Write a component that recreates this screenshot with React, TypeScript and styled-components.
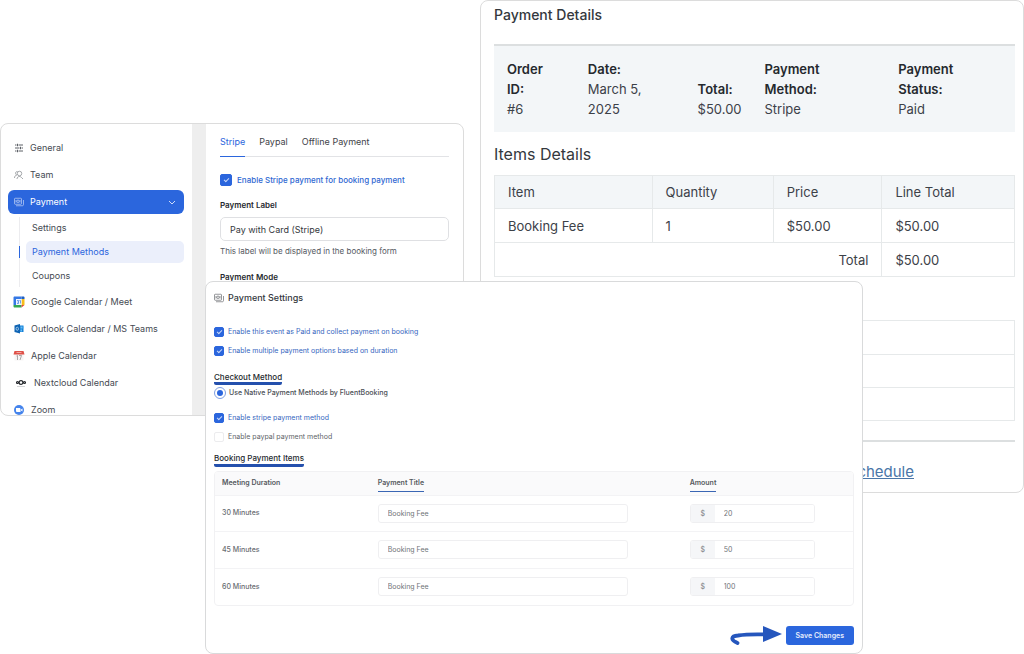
import React from 'react';
import styled, { createGlobalStyle, css } from 'styled-components';

const GlobalStyle = createGlobalStyle`
  *, *::before, *::after { box-sizing: border-box; }
  body {
    margin: 0;
    background: #fff;
    color: #3c4148;
    font-family: Inter, "Liberation Sans", sans-serif;
  }
  h2, h3, p, ul, dl, dd { margin: 0; padding: 0; font-weight: 400; }
  ul { list-style: none; }
  input, button { font-family: inherit; margin: 0; }
`;

const blue = '#2b66dd';

/* Three overlapping windows share one grid row. */
const Stage = styled.main`
  display: grid;
  grid-template-columns: 205fr 259fr 16fr 383fr 161fr;
  align-items: start;
`;

const Panel = styled.section`
  grid-row: 1;
  min-width: 0;
  background: #fff;
  border: 1px solid #dcdcdc;
  border-radius: 8px;
  overflow: hidden;
`;

/* ---------- Order details ---------- */

const OrderPanel = styled(Panel)`
  grid-column: 4 / 6;
  padding: 4px 8px 9px 13px;
`;

const OrderTitle = styled.h2<{ $large?: boolean }>`
  font-size: ${(p) => (p.$large ? 16 : 14)}px;
  font-weight: ${(p) => (p.$large ? 400 : 500)};
  line-height: 20px;
  color: #34383d;
`;

const Summary = styled.dl`
  display: grid;
  grid-template-columns: 81fr 110fr 67fr 134fr 117fr;
  align-items: end;
  margin: 19px 0 12px;
  padding: 13px 0 13px 13px;
  border-top: 2px solid #dcdfe0;
  background: #f3f6f8;
  font-size: 13px;
  line-height: 20px;

  dt { font-weight: 600; color: #25292e; }
`;

const OrderTable = styled.table`
  width: 100%;
  margin-top: 11px;
  table-layout: fixed;
  border-collapse: collapse;
  font-size: 13px;
  line-height: 16px;

  th, td {
    height: 33px;
    padding: 0 13px;
    border: 1px solid #e6e9ea;
    font-weight: 400;
    text-align: left;
  }
  th { background: #f3f6f8; }
  tbody > tr > *, tfoot > tr > * { height: 34px; }
  tfoot th { background: #fff; text-align: right; }
`;

const EmptyTable = styled.ul`
  margin: 43px 0 19px;
  border: 1px solid #e6e9ea;

  li { height: 33px; }
  li + li { border-top: 1px solid #e6e9ea; }
`;

const OrderFooter = styled.footer`
  padding: 19px 101px 0 0;
  border-top: 2px solid #dcdfe0;
  text-align: right;
`;

const OrderLink = styled.a`
  color: #4a76a8;
  font-size: 15px;
  line-height: 22px;
`;

/* ---------- Settings ---------- */

const SettingsPanel = styled(Panel)`
  grid-column: 1 / 3;
  display: grid;
  grid-template-columns: 191fr 271fr;
  max-height: 293px;
  margin-top: 123px;
`;

const Sidebar = styled.nav`
  padding: 12px 8px 0 7px;
`;

const NavList = styled.ul`
  display: flex;
  flex-direction: column;
  gap: 3px;
`;

const NavLink = styled.a<{ $active?: boolean; $app?: boolean; $wide?: boolean }>`
  display: flex;
  align-items: center;
  gap: ${(p) => (p.$wide ? 7 : 6)}px;
  height: 24px;
  padding: 0 8px 0 ${(p) => (p.$wide ? 7 : p.$app ? 5 : 6)}px;
  border-radius: 6px;
  background: ${(p) => (p.$active ? blue : 'transparent')};
  color: ${(p) => (p.$active ? '#fff' : '#454a52')};
  font-size: 9px;
  line-height: 14px;
  text-decoration: none;
  white-space: nowrap;

  svg { flex: none; }
  span { flex: 1; }
`;

const SubList = styled.ul`
  display: flex;
  flex-direction: column;
  gap: 2px;
  margin: 3px 0 0 11px;
  border-left: 1px solid #ececef;
`;

const SubLink = styled.a<{ $active?: boolean }>`
  position: relative;
  display: block;
  height: 22px;
  margin-left: 6px;
  padding: 0 6px;
  border-radius: 5px;
  font-size: 9px;
  line-height: 22px;
  text-decoration: none;
  color: #454a52;

  ${(p) =>
    p.$active &&
    css`
      background: #ebeffb;
      color: ${blue};
      &::before {
        content: '';
        position: absolute;
        left: -7px;
        top: 5px;
        width: 1px;
        height: 12px;
        background: ${blue};
      }
    `}
`;

const Content = styled.div`
  padding: 10px 14px 0;
  border-left: 14px solid #eee;
`;

const Tabs = styled.div`
  display: flex;
  gap: 14px;
  margin-bottom: 17px;
  border-bottom: 1px solid #e2e3e6;
`;

const Tab = styled.button<{ $active?: boolean }>`
  height: 23px;
  margin-bottom: -1px;
  padding: 0 0 6px;
  border: 0;
  border-bottom: 1px solid ${(p) => (p.$active ? blue : 'transparent')};
  background: none;
  color: ${(p) => (p.$active ? blue : '#3f4349')};
  font-size: 9px;
  line-height: 14px;
  white-space: nowrap;
`;

const CheckLabel = styled.label<{ $large?: boolean; $off?: boolean }>`
  display: flex;
  align-items: center;
  gap: ${(p) => (p.$large ? 5 : 4)}px;
  color: ${(p) => (p.$off ? '#606468' : p.$large ? '#2f68d2' : '#3566c0')};
  font-size: ${(p) => (p.$large ? 8 : 7)}px;
  font-weight: ${(p) => (p.$large ? 500 : 400)};
  line-height: 12px;
  white-space: nowrap;
`;

const CheckBox = styled.input.attrs({ type: 'checkbox' })<{ $large?: boolean }>`
  appearance: none;
  display: grid;
  place-items: center;
  flex: none;
  width: ${(p) => (p.$large ? 12 : 10)}px;
  height: ${(p) => (p.$large ? 12 : 10)}px;
  border: 1px solid #ececee;
  border-radius: 2px;

  &:checked { border-color: ${blue}; background: ${blue}; }
  &:checked::after {
    content: '';
    width: 3px;
    height: 5px;
    margin-bottom: 2px;
    border: solid #c9d8f8;
    border-width: 0 1px 1px 0;
    transform: rotate(45deg);
  }
`;

const FieldLabel = styled.label`
  display: block;
  margin-top: 14px;
  color: #25292e;
  font-size: 8px;
  font-weight: 600;
  line-height: 11px;
`;

const TextInput = styled.input<{ $large?: boolean }>`
  display: block;
  width: 100%;
  min-width: 0;
  height: ${(p) => (p.$large ? 24 : 19)}px;
  padding: 0 9px;
  border: 1px solid ${(p) => (p.$large ? '#dfe0e3' : '#efeff1')};
  border-radius: ${(p) => (p.$large ? 5 : 3)}px;
  background: #fff;
  color: ${(p) => (p.$large ? '#34383d' : '#707478')};
  font-size: ${(p) => (p.$large ? 9 : 7)}px;
  outline: none;
`;

const LabelInput = styled(TextInput)`
  margin: 6px 0 5px;
`;

const Hint = styled.p`
  margin-bottom: 15px;
  color: #55595f;
  font-size: 8px;
  line-height: 11px;
`;

/* ---------- Event payment ---------- */

const EventPanel = styled(Panel)`
  grid-column: 2 / 5;
  display: flex;
  flex-direction: column;
  margin-top: 281px;
  padding: 9px 8px 8px;
  border-color: #d9dadb;
`;

const EventTitle = styled.h2`
  display: flex;
  align-items: center;
  gap: 4px;
  margin-bottom: 21px;
  color: #34383d;
  font-size: 9px;
  font-weight: 500;
  line-height: 14px;
`;

const CheckGroup = styled.div`
  display: flex;
  flex-direction: column;
  gap: 7px;
`;

const SubHeading = styled.h3`
  align-self: flex-start;
  color: #25292e;
  font-size: 8px;
  font-weight: 500;
  line-height: 10px;
  border-bottom: 3px solid #2450ad;
  border-radius: 0 0 2px 2px;
`;

const CheckoutHeading = styled(SubHeading)`
  margin: 15px 0 2px;
`;

const ItemsHeading = styled(SubHeading)`
  margin: 10px 0 4px;
  padding-bottom: 1px;
`;

const RadioLabel = styled.label`
  display: flex;
  align-items: center;
  gap: 3px;
  margin-bottom: 13px;
  color: #4a4e54;
  font-size: 7px;
  font-weight: 500;
  line-height: 12px;
`;

const Radio = styled.input.attrs({ type: 'radio' })`
  appearance: none;
  display: grid;
  place-items: center;
  width: 12px;
  height: 12px;
  border: 1px solid #7f9fe2;
  border-radius: 50%;

  &:checked::after {
    content: '';
    width: 6px;
    height: 6px;
    border-radius: 50%;
    background: ${blue};
  }
`;

const ItemsFrame = styled.div`
  border: 1px solid #f1f1f3;
  border-radius: 4px;
  overflow: hidden;
`;

const ItemsTable = styled.table`
  width: 100%;
  table-layout: fixed;
  border-collapse: collapse;
  color: #686c71;
  font-size: 7px;
  line-height: 10px;

  th, td { padding: 0; text-align: left; font-weight: 500; }
  th:first-child { padding-left: 7px; }
  thead th { height: 23px; background: #fafafb; color: #55595e; font-weight: 600; }
  tbody th, tbody td { height: 36px; border-top: 1px solid #f3f3f5; }
  tbody tr:nth-child(n + 2) > * { height: 37px; }
`;

const Underlined = styled.span`
  display: inline-block;
  padding: 4px 0 3px;
  border-bottom: 1px solid #3a66b4;
`;

const TitleCell = styled.td`
  && { padding-right: 62px; }
`;

const AmountCell = styled.td`
  && { padding-right: 38px; }
`;

const AmountField = styled.label`
  display: flex;
  overflow: hidden;
  border: 1px solid #efeff1;
  border-radius: 3px;

  span {
    flex: none;
    width: 24px;
    background: #f5f6f8;
    color: #85898e;
    line-height: 17px;
    text-align: center;
  }
  input { height: 17px; border: 0; border-radius: 0; }
`;

const Actions = styled.div`
  display: flex;
  justify-content: flex-end;
  align-items: flex-end;
  gap: 3px;
  margin-top: 19px;
`;

const SaveButton = styled.button`
  height: 19px;
  padding: 0 10px;
  border: 0;
  border-radius: 3px;
  background: ${blue};
  color: #e6edfc;
  font-size: 7px;
  font-weight: 600;
  line-height: 10px;
`;

/* ---------- Icons ---------- */

const SlidersIcon = () => (
  <svg width="10" height="10" viewBox="0 0 20 20" fill="none" stroke="#4a4e55" strokeWidth="1.800">
    <path d="M2 4h3M9 4h9M2 10h9M15 10h3M2 16h3M9 16h9M7 1.500v5M13 7.500v5M7 13.500v5" />
  </svg>
);

const TeamIcon = () => (
  <svg width="10" height="10" viewBox="0 0 20 20" fill="none" stroke="#777b80" strokeWidth="1.300">
    <circle cx="11" cy="7" r="4.500" />
    <path d="M6 18c0-3 2-5 5-5 2 0 3 1 4 2l3 3M1 16c0-3 1-5 4-5M6 10C2 9 2 3 7 3" />
  </svg>
);

const MoneyIcon = ({ color }: { color: string }) => (
  <svg width="10" height="10" viewBox="0 0 20 20" fill="none" stroke={color} strokeWidth="1.300">
    <rect x="1" y="2.500" width="14" height="12" rx="1.500" />
    <circle cx="8" cy="8.500" r="2.500" />
    <path d="M4 6v5M12 6v5M4 17.500h13c1 0 2-1 2-2V6" />
  </svg>
);

const ChevronIcon = () => (
  <svg width="8" height="5" viewBox="0 0 8 5" fill="none" stroke="#cfdcf8" strokeWidth="1">
    <path d="M1 1l3 3 3-3" />
  </svg>
);

const GoogleIcon = () => (
  <svg width="12" height="12" viewBox="0 0 24 24">
    <path fill="#3478e5" d="M3 1h14v5H6v12H1V3c0-1 1-2 2-2z" />
    <path fill="#1e5fc4" d="M17 1h4c1 0 2 1 2 2v3h-6z" />
    <path fill="#f6bd19" d="M17 6h6v12h-6z" />
    <path fill="#35a853" d="M1 18h16v5H3c-1 0-2-1-2-2z" />
    <path fill="#e5463b" d="M17 18h6l-6 5z" />
    <path fill="#eef4fe" d="M6 6h11v12H6z" />
    <path stroke="#4b86e6" strokeWidth="1.600" fill="none" d="M8 9h3v3H9M11 12v3H8M13 9h2v6" />
  </svg>
);

const OutlookIcon = () => (
  <svg width="12" height="12" viewBox="0 0 24 24">
    <path fill="#1682d8" d="M14 5h7v13h-7z" />
    <path fill="#6bbcf2" d="M15 7h3v4h-3zM19 7h3v4h-3zM15 13h3v4h-3z" />
    <path fill="#0e64b4" d="M3 5l11-3v19L3 18z" />
    <ellipse cx="8.500" cy="11.500" rx="2.400" ry="3.200" fill="none" stroke="#b9d8f5" strokeWidth="1.600" />
  </svg>
);

const AppleIcon = () => (
  <svg width="12" height="12" viewBox="0 0 24 24">
    <path fill="#f7f5f5" d="M3 8h18v13H3z" />
    <path fill="#df5148" d="M3 2h18l2 7H1z" />
    <path stroke="#f7c6c2" strokeWidth="1.500" d="M7 5h10" />
    <path stroke="#8b8586" strokeWidth="1.400" fill="none" d="M7 12l2-1v9M12 11h5l-3 9" />
  </svg>
);

const NextcloudIcon = () => (
  <svg width="12" height="10" viewBox="0 0 24 20">
    <g fill="none" stroke="#26292d" strokeWidth="2.400">
      <circle cx="12" cy="9" r="3.800" />
      <circle cx="5" cy="9" r="2" />
      <circle cx="19" cy="9" r="2" />
    </g>
    <path stroke="#c4c6c8" strokeWidth="1.500" d="M4 17h16" />
  </svg>
);

const ZoomIcon = () => (
  <svg width="12" height="12" viewBox="0 0 24 24">
    <circle cx="12" cy="12" r="10" fill="#4584ec" />
    <path fill="#fff" d="M6 8h7c1 0 2 1 2 2v6H8c-1 0-2-1-2-2zM16 11l3-2v6l-3-2z" />
  </svg>
);

const ArrowMark = () => (
  <svg width="53" height="20" viewBox="0 0 53 20" aria-hidden="true">
    <path d="M7.500 18C0 15 1 11 8 10.500Q18 9 36 9.500" fill="none" stroke="#2556bd" strokeWidth="3.800" strokeLinecap="round" />
    <path d="M33 1l19 8-19 8z" fill="#2556bd" />
  </svg>
);

/* ---------- Data ---------- */

const apps = [
  { name: 'Google Calendar / Meet', icon: <GoogleIcon /> },
  { name: 'Outlook Calendar / MS Teams', icon: <OutlookIcon /> },
  { name: 'Apple Calendar', icon: <AppleIcon /> },
  { name: 'Nextcloud Calendar', icon: <NextcloudIcon />, wide: true },
  { name: 'Zoom', icon: <ZoomIcon /> },
];

const items = [
  { minutes: 30, amount: '20' },
  { minutes: 45, amount: '50' },
  { minutes: 60, amount: '100' },
];

const OrderDetails = () => (
  <OrderPanel>
    <OrderTitle>Payment Details</OrderTitle>
    <Summary>
      <div><dt>Order<br />ID:</dt><dd>#6</dd></div>
      <div><dt>Date:</dt><dd>March 5,<br />2025</dd></div>
      <div><dt>Total:</dt><dd>$50.00</dd></div>
      <div><dt>Payment<br />Method:</dt><dd>Stripe</dd></div>
      <div><dt>Payment<br />Status:</dt><dd>Paid</dd></div>
    </Summary>
    <OrderTitle $large>Items Details</OrderTitle>
    <OrderTable>
      <colgroup>
        <col style={{ width: '30.300%' }} />
        <col style={{ width: '23.300%' }} />
        <col style={{ width: '20.900%' }} />
        <col />
      </colgroup>
      <thead>
        <tr><th>Item</th><th>Quantity</th><th>Price</th><th>Line Total</th></tr>
      </thead>
      <tbody>
        <tr><td>Booking Fee</td><td>1</td><td>$50.00</td><td>$50.00</td></tr>
      </tbody>
      <tfoot>
        <tr><th colSpan={3}>Total</th><td>$50.00</td></tr>
      </tfoot>
    </OrderTable>
    <EmptyTable><li /><li /><li /></EmptyTable>
    <OrderFooter><OrderLink href="#reschedule">Reschedule</OrderLink></OrderFooter>
  </OrderPanel>
);

const Settings = () => (
  <SettingsPanel>
    <Sidebar>
      <NavList>
        <li><NavLink href="#general"><SlidersIcon /><span>General</span></NavLink></li>
        <li><NavLink href="#team"><TeamIcon /><span>Team</span></NavLink></li>
        <li>
          <NavLink href="#payment" $active><MoneyIcon color="#cfdcf8" /><span>Payment</span><ChevronIcon /></NavLink>
          <SubList>
            <li><SubLink href="#settings">Settings</SubLink></li>
            <li><SubLink href="#methods" $active>Payment Methods</SubLink></li>
            <li><SubLink href="#coupons">Coupons</SubLink></li>
          </SubList>
        </li>
        {apps.map((app) => (
          <li key={app.name}>
            <NavLink href="#apps" $app $wide={app.wide}>{app.icon}<span>{app.name}</span></NavLink>
          </li>
        ))}
      </NavList>
    </Sidebar>
    <Content>
      <Tabs>
        <Tab $active>Stripe</Tab>
        <Tab>Paypal</Tab>
        <Tab>Offline Payment</Tab>
      </Tabs>
      <CheckLabel $large><CheckBox $large defaultChecked />Enable Stripe payment for booking payment</CheckLabel>
      <FieldLabel htmlFor="payment-label">Payment Label</FieldLabel>
      <LabelInput id="payment-label" $large defaultValue="Pay with Card (Stripe)" />
      <Hint>This label will be displayed in the booking form</Hint>
      <FieldLabel as="p">Payment Mode</FieldLabel>
    </Content>
  </SettingsPanel>
);

const EventPayment = () => (
  <EventPanel>
    <EventTitle><MoneyIcon color="#5c6065" />Payment Settings</EventTitle>
    <CheckGroup>
      <CheckLabel><CheckBox defaultChecked />Enable this event as Paid and collect payment on booking</CheckLabel>
      <CheckLabel><CheckBox defaultChecked />Enable multiple payment options based on duration</CheckLabel>
    </CheckGroup>
    <CheckoutHeading>Checkout Method</CheckoutHeading>
    <RadioLabel><Radio name="checkout" defaultChecked />Use Native Payment Methods by FluentBooking</RadioLabel>
    <CheckGroup>
      <CheckLabel><CheckBox defaultChecked />Enable stripe payment method</CheckLabel>
      <CheckLabel $off><CheckBox />Enable paypal payment method</CheckLabel>
    </CheckGroup>
    <ItemsHeading>Booking Payment Items</ItemsHeading>
    <ItemsFrame>
      <ItemsTable>
        <colgroup>
          <col style={{ width: '25.500%' }} />
          <col style={{ width: '48.900%' }} />
          <col />
        </colgroup>
        <thead>
          <tr>
            <th>Meeting Duration</th>
            <th><Underlined>Payment Title</Underlined></th>
            <th><Underlined>Amount</Underlined></th>
          </tr>
        </thead>
        <tbody>
          {items.map((item) => (
            <tr key={item.minutes}>
              <th>{item.minutes} Minutes</th>
              <TitleCell><TextInput aria-label="Payment title" defaultValue="Booking Fee" /></TitleCell>
              <AmountCell>
                <AmountField><span>$</span><TextInput defaultValue={item.amount} /></AmountField>
              </AmountCell>
            </tr>
          ))}
        </tbody>
      </ItemsTable>
    </ItemsFrame>
    <Actions><ArrowMark /><SaveButton>Save Changes</SaveButton></Actions>
  </EventPanel>
);

export default function App() {
  return (
    <>
      <GlobalStyle />
      <Stage>
        <OrderDetails />
        <Settings />
        <EventPayment />
      </Stage>
    </>
  );
}
